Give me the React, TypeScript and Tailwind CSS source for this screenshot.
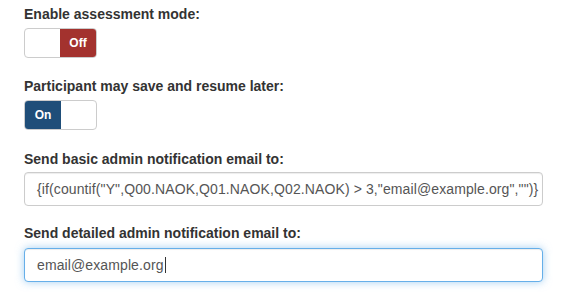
import React from 'react'

const Toggle = ({ on }: { on: boolean }) => (
  <div className="flex h-[30px] w-[73px] overflow-hidden rounded-[4px] border border-[#cccccc] bg-white">
    {on ? (
      <>
        <div className="flex w-[36px] items-center justify-center bg-[#1f4e79] text-[12px] font-bold text-white">On</div>
        <div className="flex-1" />
      </>
    ) : (
      <>
        <div className="flex-1" />
        <div className="flex w-[36px] items-center justify-center bg-[#a3322e] text-[12px] font-bold text-white">Off</div>
      </>
    )}
  </div>
)

const Label = ({ children, className = '' }: { children: React.ReactNode; className?: string }) => (
  <div className={`text-[14px] font-bold leading-[20px] text-[#333333] ${className}`}>{children}</div>
)

export default function App() {
  return (
    <div
      className="min-h-screen bg-white pl-6 pt-1"
      style={{ fontFamily: '"Liberation Sans", Arial, sans-serif' }}
    >
      <Label className="mb-1">Enable assessment mode:</Label>
      <Toggle on={false} />

      <Label className="mt-[18px] mb-1">Participant may save and resume later:</Label>
      <Toggle on />

      <Label className="mt-[19px] mb-[3px]">Send basic admin notification email to:</Label>
      <div className="flex h-[34px] w-[519px] items-center rounded-[4px] border border-[#cccccc] bg-white px-3 text-[14px] tracking-[0.11px] whitespace-nowrap text-[#555555] shadow-[inset_0_1px_1px_rgba(0,0,0,0.075)]">
        {'{if(countif("Y",Q00.NAOK,Q01.NAOK,Q02.NAOK) > 3,"email@example.org","")}'}
      </div>

      <Label className="mt-[17px] mb-[5px]">Send detailed admin notification email to:</Label>
      <div className="flex h-[34px] w-[519px] items-center rounded-[4px] border border-[#66afe9] bg-white px-3 text-[14px] tracking-[0.11px] text-[#555555] shadow-[inset_0_1px_1px_rgba(0,0,0,0.075),0_0_8px_rgba(102,175,233,0.6)]">
        <span>email@example.org</span>
        <span className="ml-px h-[16px] border-l border-[#333333]" />
      </div>
    </div>
  )
}
